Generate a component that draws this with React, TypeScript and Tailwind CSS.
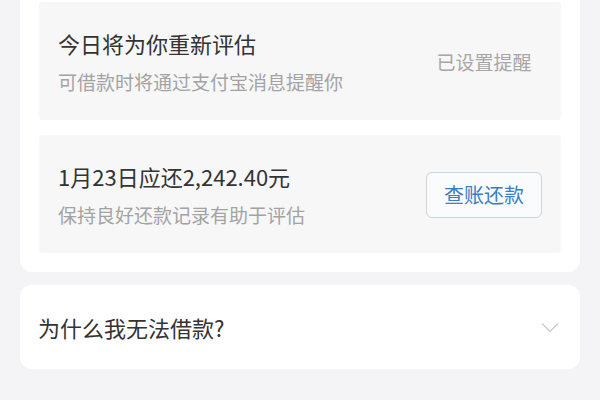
import React from 'react';

const font = { fontFamily: '"Noto Sans CJK SC", "Noto Sans", sans-serif' };

function InfoBox({ title, desc, right }: { title: string; desc: string; right: React.ReactNode }) {
    return (
        <div className="flex items-center justify-between rounded-[4px] bg-[#f7f7f8] pl-[19px] pr-[19px] pt-[26px] pb-[24px]">
            <div className="flex flex-col">
                <div className="text-[22px] leading-[30px] text-[#333333]">{title}</div>
                <div className="mt-[10px] text-[19px] leading-[28px] text-[#a3a3a3]">{desc}</div>
            </div>
            <div className="flex w-[116px] justify-center">{right}</div>
        </div>
    );
}

export default function App() {
    return (
        <div className="min-h-[400px] w-[600px] bg-[#f4f4f6] px-5" style={font}>
            {/* status card */}
            <div className="flex flex-col gap-[15px] rounded-b-[12px] bg-white px-[19px] pt-[2px] pb-[19px]">
                <InfoBox
                    title="今日将为你重新评估"
                    desc="可借款时将通过支付宝消息提醒你"
                    right={<span className="text-[19px] leading-[28px] text-[#a6a6a6]">已设置提醒</span>}
                />
                <InfoBox
                    title="1月23日应还2,242.40元"
                    desc="保持良好还款记录有助于评估"
                    right={
                        <button className="h-[46px] w-[116px] rounded-[6px] border border-[#c9d6e0] bg-[#f9fbfc] text-[20px] text-[#3b7cc4]">
                            查账还款
                        </button>
                    }
                />
            </div>

            {/* faq */}
            <div className="mt-[13px] flex h-[84px] items-center justify-between rounded-[12px] bg-white pl-[18px] pr-[21px]">
                <span className="text-[22px] leading-[30px] text-[#333333]">为什么我无法借款?</span>
                <svg width="18" height="11" viewBox="0 0 18 11" fill="none">
                    <path d="M1 1.5L9 9.5L17 1.5" stroke="#cccccc" strokeWidth="1.5" />
                </svg>
            </div>
        </div>
    );
}
